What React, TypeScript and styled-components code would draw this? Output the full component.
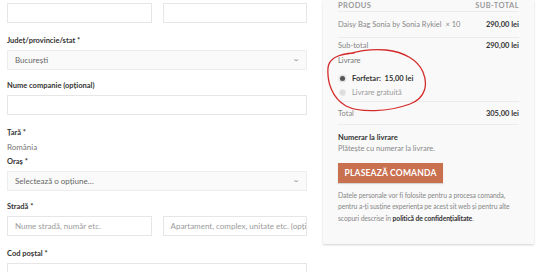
import * as React from 'react';
import styled, { createGlobalStyle } from 'styled-components';

const GlobalStyle = createGlobalStyle`
  html, body {
    margin: 0;
    padding: 0;
    background: #ffffff;
    font-family: Lato, "Open Sans", "Liberation Sans", sans-serif;
    color: #666;
  }
`

export const Page = styled.div`
    display: flex;
    align-items: flex-start;
    width: 540px;
    height: 272px;
    overflow: hidden;
    position: relative;
`

export const FormColumn = styled.div`
    width: 300px;
    margin-left: 7px;
    padding-top: 3px;
    display: flex;
    flex-direction: column;
`

export const Row = styled.div`
    display: flex;
    gap: 11px;
`

export const Field = styled.div<{ $gap?: number }>`
    display: flex;
    flex-direction: column;
    margin-bottom: ${p => p.$gap ?? 12}px;
    flex: 1 1 0;
    min-width: 0;
`

export const Label = styled.label`
    font-size: 7.5px;
    line-height: 10px;
    font-weight: 700;
    color: #333;
    margin-bottom: 4px;
`

export const Input = styled.div`
    box-sizing: border-box;
    height: 20px;
    border: 1px solid #e6e6e6;
    background: #fff;
    font-size: 8px;
    line-height: 18px;
    color: #9a9a9a;
    padding: 0 7px;
    white-space: nowrap;
    overflow: hidden;
`

export const Select = styled.div`
    box-sizing: border-box;
    height: 20px;
    border: 1px solid #ededed;
    background: #fafafa;
    font-size: 8px;
    line-height: 18px;
    color: #666;
    padding: 0 7px;
    display: flex;
    justify-content: space-between;
    align-items: center;
`

export const Chevron = styled.span`
    font-size: 7px;
    color: #888;
    transform: scaleX(1.4) translateY(-2px);
`

export const Plain = styled.div`
    font-size: 8px;
    line-height: 10px;
    color: #777;
    margin-bottom: 5px;
`

export const Panel = styled.div`
    margin-left: 16px;
    width: 211px;
    box-sizing: border-box;
    background: #f9f9f9;
    box-shadow: 0 1px 2px rgba(0,0,0,0.18);
    padding: 0 15px 20px 15px;
    position: relative;
`

export const TableRow = styled.div<{ $h: number; $line?: boolean }>`
    display: flex;
    justify-content: space-between;
    align-items: center;
    height: ${p => p.$h}px;
    border-bottom: ${p => (p.$line ? '1px solid #ececec' : 'none')};
    font-size: 7.5px;
    color: #888;
`

export const Head = styled.span`
    font-size: 7.5px;
    font-weight: 700;
    letter-spacing: 0.4px;
    color: #999;
`

export const Amount = styled.span`
    font-weight: 700;
    color: #333;
    font-size: 7.5px;
`

export const Shipping = styled.div`
    border-bottom: 1px solid #ececec;
    padding-top: 3px;
    height: 49px;
    box-sizing: border-box;
`

export const ShipTitle = styled.div`
    font-size: 7.5px;
    color: #777;
    line-height: 10px;
    margin-bottom: 5px;
`

export const Radio = styled.div<{ $on?: boolean }>`
    display: flex;
    align-items: center;
    height: 14px;
    font-size: 7.5px;
    color: ${p => (p.$on ? '#333' : '#999')};
    font-weight: ${p => (p.$on ? 700 : 400)};
`

export const Dot = styled.span<{ $on?: boolean }>`
    width: 5px;
    height: 5px;
    border-radius: 50%;
    margin: 0 7px 0 2px;
    background: ${p => (p.$on ? '#555' : '#ddd')};
    box-shadow: ${p => (p.$on ? '0 0 0 1.5px #e4e4e4' : '0 0 0 1px #e8e8e8')};
`

export const PayTitle = styled.div`
    margin-top: 8px;
    font-size: 7.5px;
    font-weight: 700;
    color: #333;
    line-height: 10px;
`

export const PayText = styled.div`
    font-size: 7.5px;
    color: #888;
    line-height: 12px;
`

export const Button = styled.div`
    margin-top: 8px;
    width: 105px;
    height: 20px;
    background: #c9704f;
    color: #fff;
    font-weight: 700;
    font-size: 8.5px;
    letter-spacing: 0.2px;
    display: flex;
    align-items: center;
    justify-content: center;
    box-shadow: 0 1px 1px rgba(0,0,0,0.15);
`

export const Notice = styled.p`
    margin: 7px 0 0 0;
    font-size: 6.8px;
    line-height: 11.3px;
    letter-spacing: -0.1px;
    color: #888;

    b {
      color: #333;
      font-weight: 700;
    }
`

export const Scribble = styled.svg`
    position: absolute;
    left: 3px;
    top: 48px;
    pointer-events: none;
`

export default function App() {
  return (
    <Page>
      <GlobalStyle />
      <FormColumn>
        <Row>
          <Field $gap={13}><Input /></Field>
          <Field $gap={13}><Input /></Field>
        </Row>
        <Field $gap={11}>
          <Label>Județ/provincie/stat *</Label>
          <Select>București<Chevron>⌄</Chevron></Select>
        </Field>
        <Field $gap={13}>
          <Label>Nume companie (opțional)</Label>
          <Input />
        </Field>
        <Label>Țară *</Label>
        <Plain>România</Plain>
        <Field $gap={11}>
          <Label>Oraș *</Label>
          <Select>Selectează o opțiune…<Chevron>⌄</Chevron></Select>
        </Field>
        <Label>Stradă *</Label>
        <Row>
          <Field $gap={13}><Input>Nume stradă, număr etc.</Input></Field>
          <Field $gap={13}><Input>Apartament, complex, unitate etc. (opțional)</Input></Field>
        </Row>
        <Field>
          <Label>Cod poștal *</Label>
          <Input />
        </Field>
      </FormColumn>

      <Panel>
        <TableRow $h={11} $line>
          <Head>PRODUS</Head>
          <Head>SUB-TOTAL</Head>
        </TableRow>
        <TableRow $h={25} $line>
          <span>Daisy Bag Sonia by Sonia Rykiel&nbsp; × 10</span>
          <Amount>290,00 lei</Amount>
        </TableRow>
        <TableRow $h={15}>
          <span>Sub-total</span>
          <Amount>290,00 lei</Amount>
        </TableRow>
        <Shipping>
          <ShipTitle>Livrare</ShipTitle>
          <Radio $on><Dot $on />Forfetar:&nbsp; 15,00 lei</Radio>
          <Radio><Dot />Livrare gratuită</Radio>
        </Shipping>
        <TableRow $h={22} $line>
          <span>Total</span>
          <Amount>305,00 lei</Amount>
        </TableRow>
        <PayTitle>Numerar la livrare</PayTitle>
        <PayText>Plătește cu numerar la livrare.</PayText>
        <Button>PLASEAZĂ COMANDA</Button>
        <Notice>
          Datele personale vor fi folosite pentru a procesa comanda, pentru a-ți susține experiența pe acest sit web și pentru alte scopuri descrise în <b>politică de confidențialitate</b>.
        </Notice>
        <Scribble width="104" height="66" viewBox="0 0 104 66">
          <path
            d="M28 5 C 12 6, 3 10, 2 20 C 1 34, 6 50, 20 58 C 34 65, 62 64, 84 56 C 100 50, 102 36, 97 24 C 92 12, 78 4, 60 2 C 48 1, 36 2, 22 6"
            fill="none"
            stroke="#d42a2a"
            strokeWidth="1.3"
            strokeLinecap="round"
          />
        </Scribble>
      </Panel>
    </Page>
  );
}
